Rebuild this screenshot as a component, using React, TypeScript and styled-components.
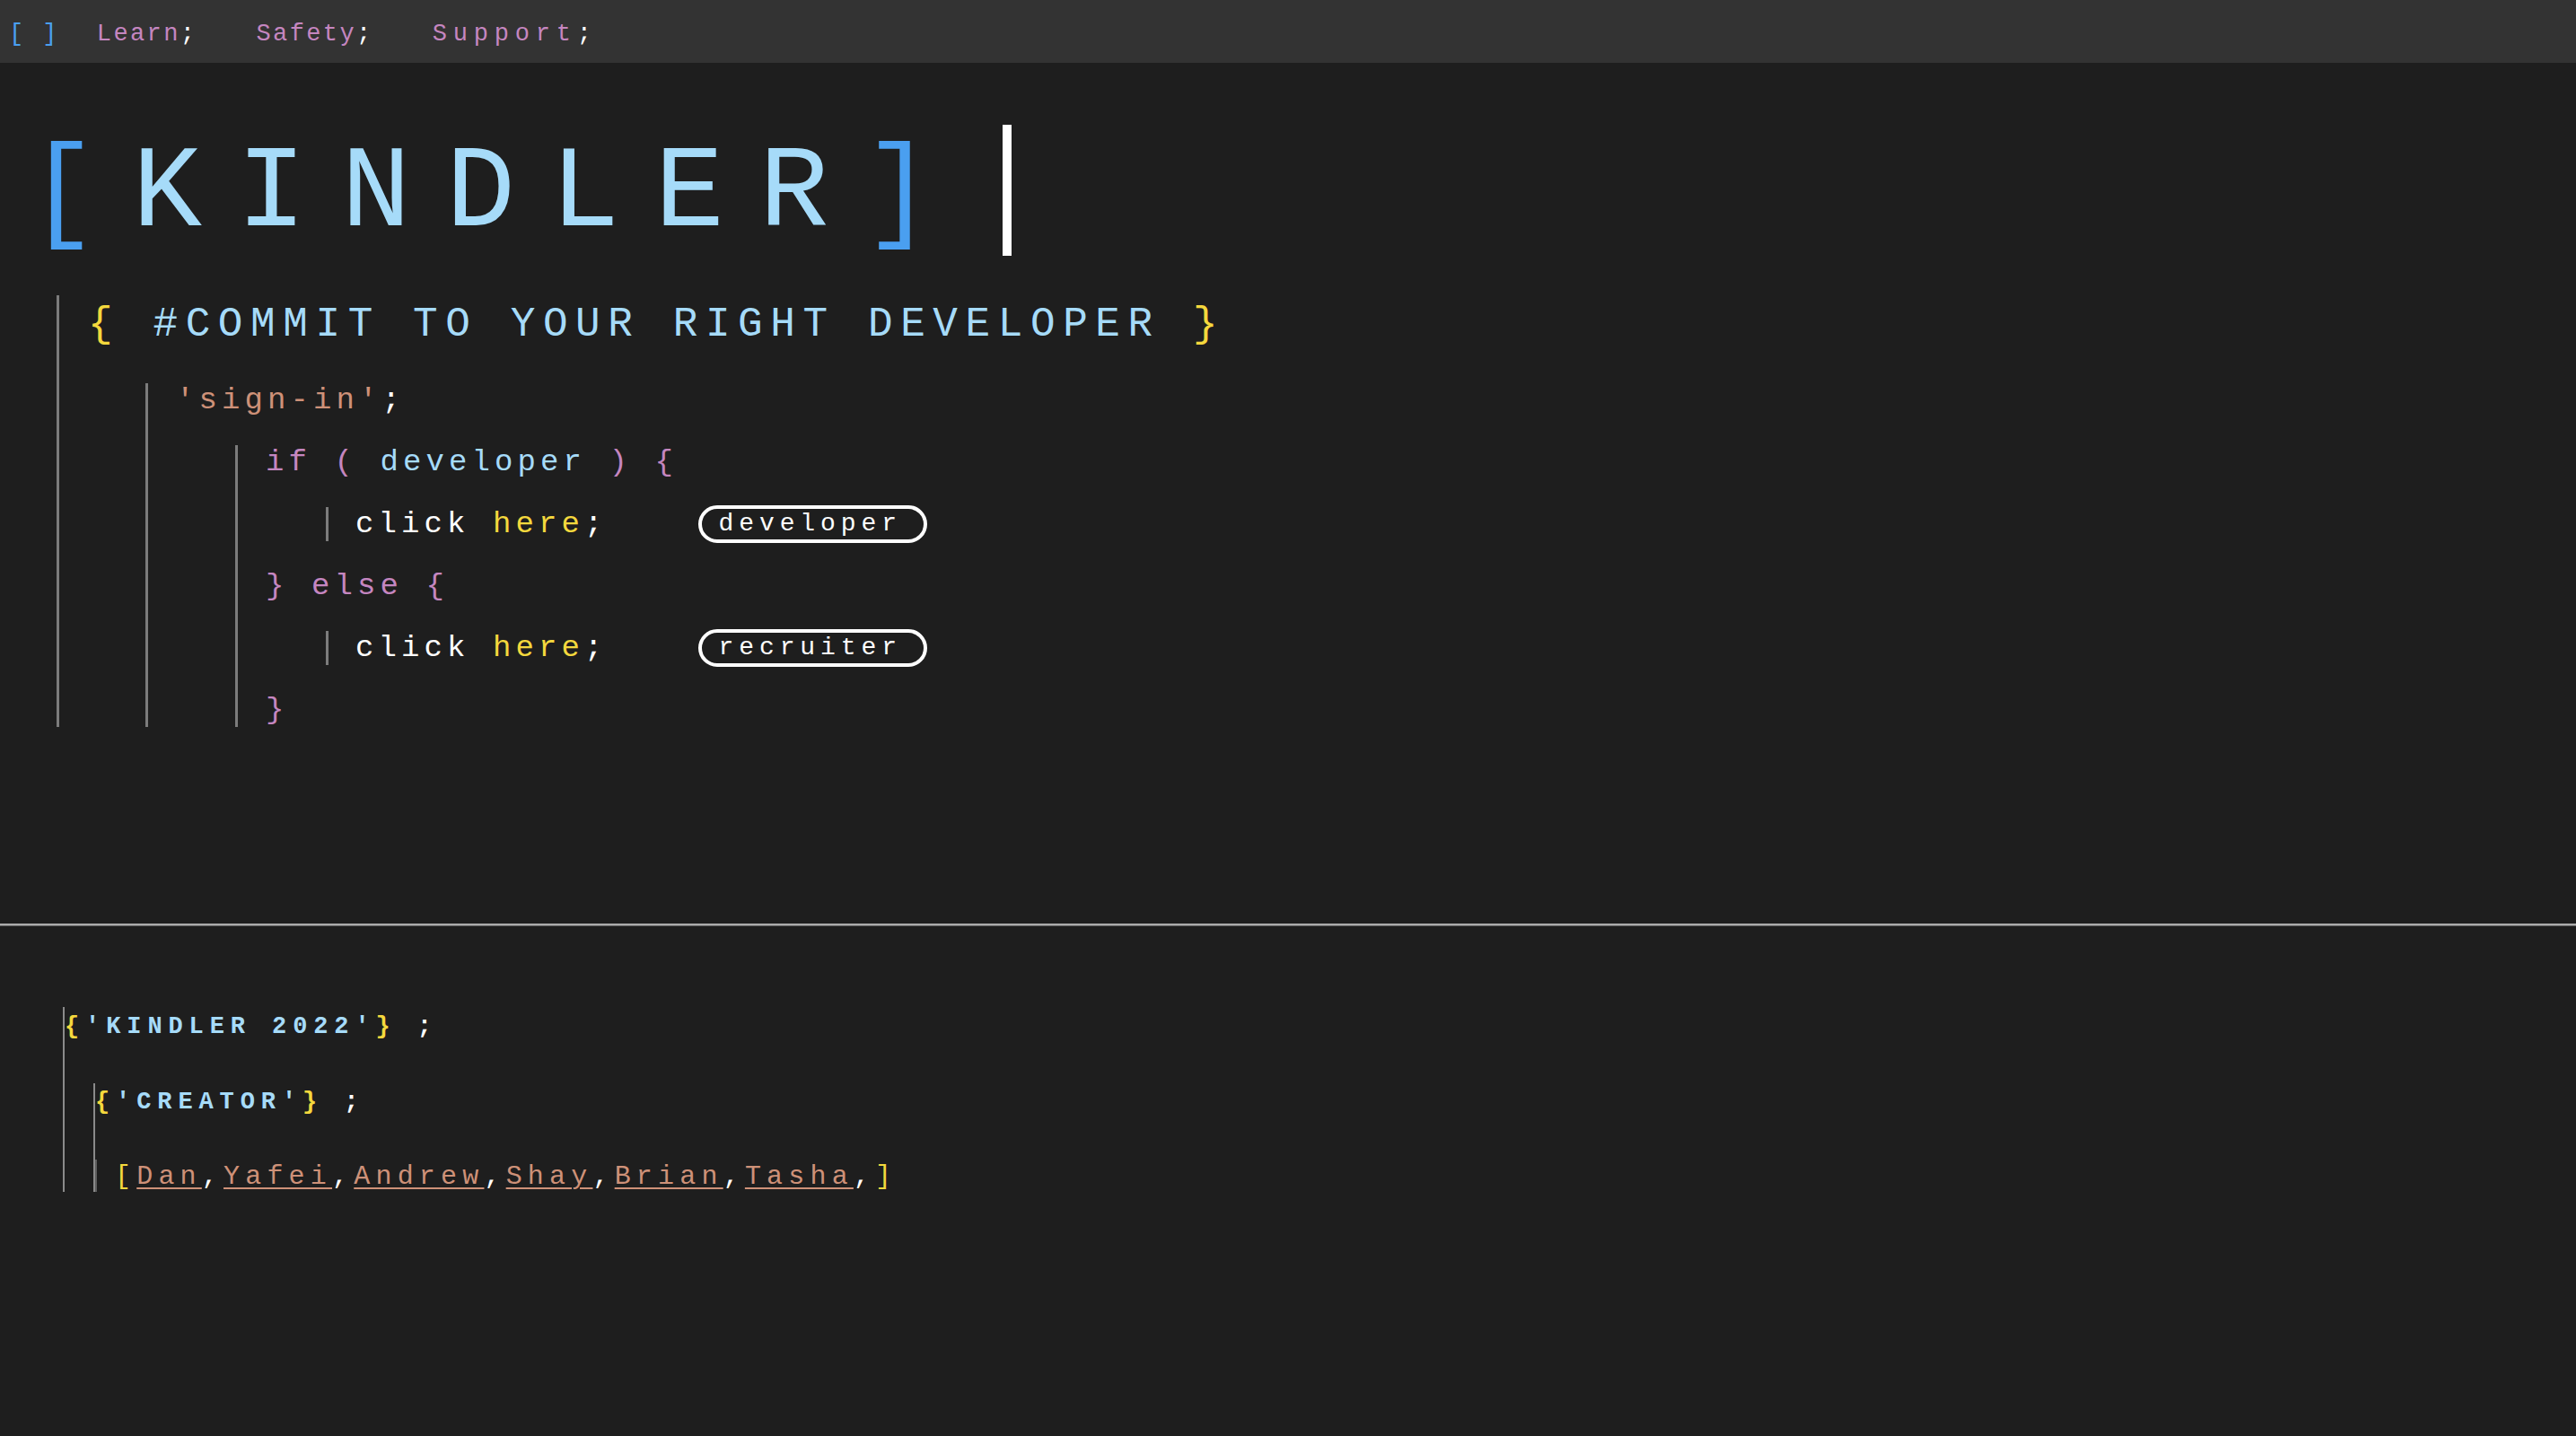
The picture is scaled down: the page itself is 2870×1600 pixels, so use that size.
import React from "react";
import styled, { createGlobalStyle } from "styled-components";

const C = {
  bg: "#1e1e1e",
  nav: "#333333",
  blue: "#4a9ff0",
  light: "#a6dbf9",
  purple: "#c586c0",
  yellow: "#f4d83d",
  orange: "#ce9178",
  white: "#ffffff",
  bar: "#7c7c7c",
};

const GlobalStyle = createGlobalStyle`
  html, body {
    margin: 0;
    padding: 0;
    background: ${C.bg};
  }
  body {
    font-family: "Liberation Mono", "Courier New", monospace;
    min-height: 100vh;
  }
  #root {
    min-height: 100vh;
    background: ${C.bg};
  }
`;

/* ---------- nav ---------- */
const NavBar = styled.nav`
  height: 70px;
  box-sizing: border-box;
  background: ${C.nav};
  display: flex;
  align-items: center;
  padding: 5px 0 0 10px;
  font-size: 27px;
  letter-spacing: 2.4px;
`;

const NavBrackets = styled.span`
  color: ${C.blue};
  margin-right: 42px;
  white-space: pre;
`;

const NavLink = styled.a<{ $spacing?: number }>`
  color: ${C.purple};
  text-decoration: none;
  margin-right: 66px;
  letter-spacing: ${(p) => p.$spacing ?? 2.4}px;
  cursor: pointer;
`;

const Semi = styled.span`
  color: ${C.white};
`;

/* ---------- hero ---------- */
const Hero = styled.main`
  height: 959px;
  box-sizing: border-box;
  padding: 69px 0 0 31px;
`;

const TitleRow = styled.div`
  display: flex;
`;

const Title = styled.h1`
  margin: 0;
  font-size: 129px;
  font-weight: 400;
  line-height: 135px;
  padding: 11px 38px 0 0;
  letter-spacing: 39px;
  color: ${C.light};
  border-right: 10px solid ${C.white};
  white-space: pre;
`;

const Paint = styled.span<{ $c: string }>`
  color: ${(p) => p.$c};
`;

const Block = styled.div<{ $top: number; $left: number; $pad: number }>`
  display: flex;
  flex-direction: column;
  margin-top: ${(p) => p.$top}px;
  margin-left: ${(p) => p.$left}px;
  border-left: 3px solid ${C.bar};
  padding-left: ${(p) => p.$pad}px;
`;

const CodeStack = styled(Block)`
  gap: 31px;
`;

const Subtitle = styled.h2`
  margin: 0;
  font-size: 46px;
  font-weight: 400;
  line-height: 66px;
  letter-spacing: 8.6px;
  color: ${C.light};
  white-space: pre;
`;

const CodeLine = styled.div`
  font-size: 34px;
  line-height: 38px;
  height: 38px;
  letter-spacing: 5.1px;
  white-space: pre;
  color: ${C.white};
`;

const ClickRow = styled.div`
  display: flex;
  align-items: center;
  height: 38px;
  margin-left: 67px;
  border-left: 3px solid ${C.bar};
  padding-left: 30px;
  font-size: 34px;
  line-height: 38px;
  letter-spacing: 5.1px;
  white-space: pre;
  color: ${C.white};
`;

const PillButton = styled.button`
  flex: none;
  margin-left: 101px;
  width: 255px;
  height: 42px;
  box-sizing: border-box;
  border: 4px solid ${C.white};
  border-radius: 999px;
  background: transparent;
  color: ${C.white};
  font-family: "Liberation Mono", "Courier New", monospace;
  font-size: 28px;
  letter-spacing: 5.9px;
  line-height: 34px;
  padding: 0 0 0 19px;
  text-align: left;
  cursor: pointer;
`;

/* ---------- divider + footer ---------- */
const Divider = styled.hr`
  margin: 0;
  height: 0;
  border: none;
  border-top: 2px solid #ababab;
  border-bottom: 1px solid #6a6a6a;
`;

const Footer = styled.footer`
  padding: 90px 0 0 70px;
`;

const FootBlock = styled.div<{ $top: number; $left: number }>`
  display: flex;
  flex-direction: column;
  margin-top: ${(p) => p.$top}px;
  margin-left: ${(p) => p.$left}px;
  border-left: 2px solid #8a8a8a;
  padding-top: ${(p) => (p.$top ? 3 : 4)}px;
`;

const FootHeading = styled.div`
  font-size: 27px;
  font-weight: 700;
  line-height: 36px;
  letter-spacing: 6.9px;
  color: ${C.light};
  white-space: pre;
`;

const NamesLine = styled.div`
  margin-top: 46px;
  border-left: 2px solid #5e5e5e;
  padding: 2px 0 0 20px;
  font-size: 30px;
  line-height: 34px;
  letter-spacing: 6.2px;
  color: ${C.white};
  white-space: pre;
`;

const Name = styled.a`
  color: ${C.orange};
  text-decoration: underline;
  text-decoration-thickness: 2px;
  text-underline-offset: 4px;
  cursor: pointer;
`;

const names = ["Dan", "Yafei", "Andrew", "Shay", "Brian", "Tasha"];

function ClickLine({ label }: { label: string }) {
  return (
    <ClickRow>
      <span>click </span>
      <Paint $c={C.yellow}>here</Paint>
      <span>;</span>
      <PillButton>{label}</PillButton>
    </ClickRow>
  );
}

export default function App() {
  return (
    <>
      <GlobalStyle />
      <NavBar>
        <NavBrackets>[ ]</NavBrackets>
        <NavLink>
          Learn<Semi>;</Semi>
        </NavLink>
        <NavLink>
          Safety<Semi>;</Semi>
        </NavLink>
        <NavLink $spacing={6.8}>
          Support<Semi>;</Semi>
        </NavLink>
      </NavBar>

      <Hero>
        <TitleRow>
          <Title>
            <Paint $c={C.blue}>[</Paint>KINDLER<Paint $c={C.blue}>]</Paint>
          </Title>
        </TitleRow>

        <Block $top={44} $left={32} $pad={32}>
          <Subtitle>
            <Paint $c={C.yellow}>{"{"}</Paint> #COMMIT TO YOUR RIGHT DEVELOPER{" "}
            <Paint $c={C.yellow}>{"}"}</Paint>
          </Subtitle>

          <CodeStack $top={32} $left={64} $pad={31}>
            <CodeLine>
              <Paint $c={C.orange}>'sign-in'</Paint>;
            </CodeLine>

            <CodeStack $top={0} $left={66} $pad={31}>
              <CodeLine>
                <Paint $c={C.purple}>if ( </Paint>
                <Paint $c={C.light}>developer</Paint>
                <Paint $c={C.purple}> ) {"{"}</Paint>
              </CodeLine>
              <ClickLine label="developer" />
              <CodeLine>
                <Paint $c={C.purple}>{"} else {"}</Paint>
              </CodeLine>
              <ClickLine label="recruiter" />
              <CodeLine>
                <Paint $c={C.purple}>{"}"}</Paint>
              </CodeLine>
            </CodeStack>
          </CodeStack>
        </Block>
      </Hero>

      <Divider />

      <Footer>
        <FootBlock $top={0} $left={0}>
          <FootHeading>
            <Paint $c={C.yellow}>{"{"}</Paint>'KINDLER 2022'
            <Paint $c={C.yellow}>{"}"}</Paint>
            <Paint $c={C.white}> ;</Paint>
          </FootHeading>

          <FootBlock $top={45} $left={32}>
            <FootHeading>
              <Paint $c={C.yellow}>{"{"}</Paint>'CREATOR'
              <Paint $c={C.yellow}>{"}"}</Paint>
              <Paint $c={C.white}> ;</Paint>
            </FootHeading>
            <NamesLine>
              <Paint $c={C.yellow}>[</Paint>
              {names.map((n) => (
                <React.Fragment key={n}>
                  <Name>{n}</Name>,
                </React.Fragment>
              ))}
              <Paint $c={C.yellow}>]</Paint>
            </NamesLine>
          </FootBlock>
        </FootBlock>
      </Footer>
    </>
  );
}
